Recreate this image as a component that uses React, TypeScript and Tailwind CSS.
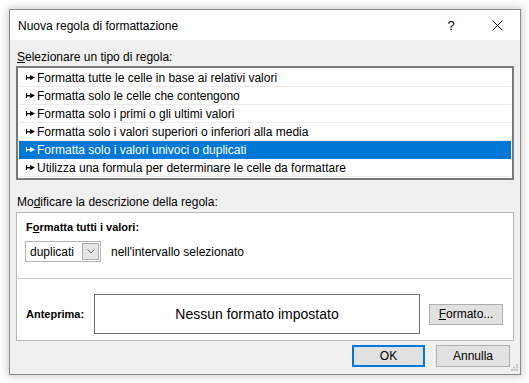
import React from "react";

const rules = [
  "Formatta tutte le celle in base ai relativi valori",
  "Formatta solo le celle che contengono",
  "Formatta solo i primi o gli ultimi valori",
  "Formatta solo i valori superiori o inferiori alla media",
  "Formatta solo i valori univoci o duplicati",
  "Utilizza una formula per determinare le celle da formattare",
];

function RuleArrow({ color }: { color: string }) {
  return (
    <svg width="9" height="7" viewBox="0 0 9 7" className="shrink-0">
      <rect x="0" y="1" width="1" height="5" fill={color} />
      <rect x="1" y="3" width="4" height="1.4" fill={color} />
      <polygon points="4,1 9,3.6 4,6.2" fill={color} />
    </svg>
  );
}

export default function App() {
  const selected = 4;

  return (
    <div
      className="w-[529px] h-[383px] bg-white p-[9px] text-[12px] text-black"
      style={{ fontFamily: '"Segoe UI", "Liberation Sans", Arial, sans-serif' }}
    >
      <div className="w-[512px] h-[366px] border border-[#8a8a8a] bg-[#f0f0f0] flex flex-col shadow-[0_0_8px_2px_rgba(0,0,0,0.18)]">
        {/* Title bar */}
        <div className="h-[30px] bg-white flex items-center shrink-0 pt-px">
          <span className="pl-[8px] flex-1">Nuova regola di formattazione</span>
          <div className="w-[46px] h-full flex items-center justify-center text-[13px]">?</div>
          <div className="w-[46px] h-full flex items-center justify-center">
            <svg width="11" height="11" viewBox="0 0 11 11">
              <path d="M0.5 0.5 L10.5 10.5 M10.5 0.5 L0.5 10.5" stroke="#000" strokeWidth="1" />
            </svg>
          </div>
        </div>

        {/* Body */}
        <div className="flex-1 px-[6px] pt-[9px] flex flex-col">
          <div className="h-[16px] leading-[16px] pl-[1px]">
            <span className="underline">S</span>elezionare un tipo di regola:
          </div>

          <div className="mt-[1px] h-[114px] border-2 border-[#7a7a7a] bg-white p-px">
            {rules.map((rule, i) => {
              const isSel = i === selected;
              return (
                <div
                  key={rule}
                  className={`h-[18px] flex items-center gap-[2px] pl-[7px] border-b ${
                    isSel ? "bg-[#0078d7] text-white border-[#0078d7]" : "border-[#ebebeb]"
                  }`}
                >
                  <RuleArrow color={isSel ? "#ffffff" : "#000000"} />
                  <span className="leading-[16px]">{rule}</span>
                </div>
              );
            })}
          </div>

          <div className="mt-[14px] h-[16px] leading-[16px] pl-[1px]">
            Mo<span className="underline">d</span>ificare la descrizione della regola:
          </div>

          <div className="mt-[2px] h-[129px] border border-[#b9b9b9] bg-white flex flex-col">
            <div className="pt-[6px] pl-[9px] h-[22px] leading-[16px] font-bold text-[11px]">
              F<span className="underline">o</span>rmatta tutti i valori:
            </div>
            <div className="mt-[6px] pl-[8px] flex items-center gap-[10px]">
              <div className="w-[76px] h-[21px] border border-[#b4b4b4] bg-white flex items-center justify-between pl-[4px] pr-px">
                <span>duplicati</span>
                <div className="w-[17px] h-[17px] border border-[#adadad] bg-[#e5e5e5] flex items-center justify-center">
                  <svg width="8" height="5" viewBox="0 0 8 5">
                    <path d="M0.5 0.5 L4 4 L7.5 0.5" stroke="#6d6d6d" strokeWidth="1" fill="none" />
                  </svg>
                </div>
              </div>
              <span>nell'intervallo selezionato</span>
            </div>
            <div className="mt-[16px] mx-px h-px bg-[#c9c9c9]" />
            <div className="mt-[15px] pl-[9px] flex items-center">
              <span className="w-[68px] font-bold text-[11px]">Anteprima:</span>
              <div className="w-[326px] h-[40px] border border-[#6e6e6e] bg-white flex items-center justify-center text-[14px]">
                Nessun formato impostato
              </div>
              <button className="ml-[9px] w-[74px] h-[21px] border border-[#adadad] bg-[#e1e1e1]">
                <span className="underline">F</span>ormato...
              </button>
            </div>
          </div>

          <div className="mt-[4px] flex justify-end gap-[11px] pr-[4px]">
            <button className="w-[73px] h-[22px] border-2 border-[#0078d7] bg-[#e1e1e1]">OK</button>
            <button className="w-[74px] h-[22px] border border-[#adadad] bg-[#e1e1e1]">Annulla</button>
          </div>
          <div className="flex justify-end -mt-[3px] -mr-[4px]">
            <svg width="7" height="7" viewBox="0 0 7 7">
              <rect x="5" y="0" width="2" height="2" fill="#c4c4c4" />
              <rect x="2" y="2.5" width="2" height="2" fill="#c4c4c4" />
              <rect x="5" y="2.5" width="2" height="2" fill="#c4c4c4" />
              <rect x="0" y="5" width="2" height="2" fill="#c4c4c4" />
              <rect x="2.5" y="5" width="2" height="2" fill="#c4c4c4" />
              <rect x="5" y="5" width="2" height="2" fill="#c4c4c4" />
            </svg>
          </div>
        </div>
      </div>
    </div>
  );
}
